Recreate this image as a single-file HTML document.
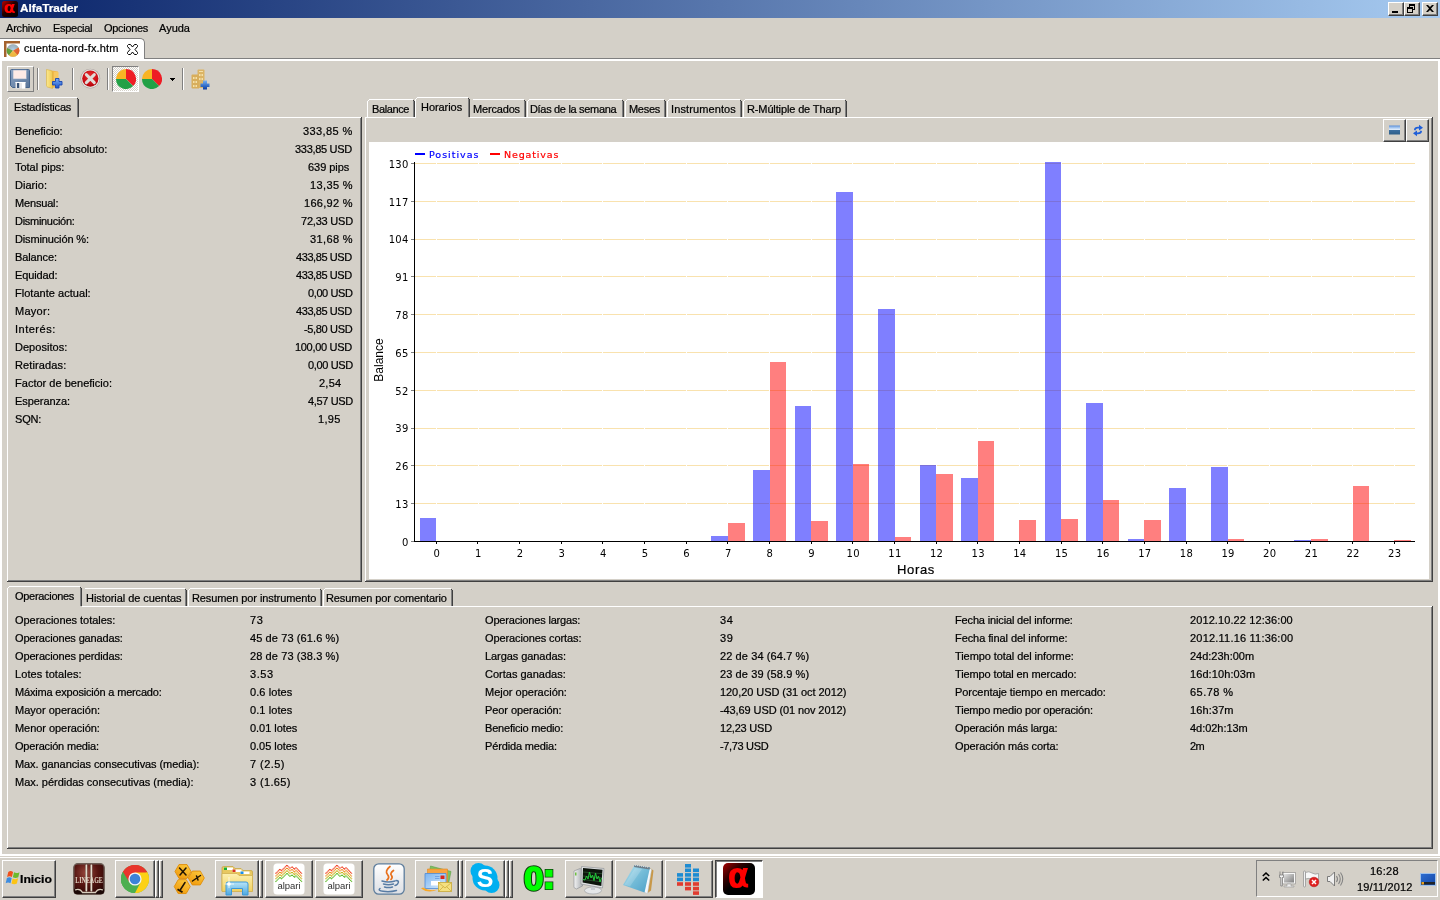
<!DOCTYPE html><html lang="es"><head><meta charset="utf-8"><title>AlfaTrader</title><style>
*{box-sizing:border-box;margin:0;padding:0}
html,body{width:1440px;height:900px;overflow:hidden;background:#d4d0c8}
body{position:relative;font-family:"Liberation Sans",sans-serif;font-size:11px;color:#000;line-height:18px}
.a{position:absolute}
.t{position:absolute;white-space:pre;height:18px;line-height:18px;will-change:transform;-webkit-text-stroke:.22px}
.r{text-align:right}
.b{font-weight:bold}
svg{position:absolute;overflow:visible;will-change:transform}
</style></head><body>
<div class="a" style="left:0px;top:0px;width:1440px;height:18px;background:linear-gradient(90deg,#0a246a 0%,#a6caf0 100%);"></div>
<svg style="left:2px;top:1px" width="16" height="16" viewBox="0 0 16 16"><defs><linearGradient id="ig" x1="0" y1="0" x2="1" y2="1"><stop offset="0" stop-color="#c00000"/><stop offset=".45" stop-color="#200000"/><stop offset="1" stop-color="#000"/></linearGradient></defs><rect width="16" height="16" rx="2.5" fill="url(#ig)"/><text x="1.800" y="12" font-family="DejaVu Sans,sans-serif" font-weight="bold" font-size="15.500" fill="#ff0000" textLength="11.800" lengthAdjust="spacingAndGlyphs">α</text></svg>
<div class="t b" style="left:20.3px;top:-1px;transform:scaleX(1.067);transform-origin:0 0;font-weight:bold;color:#fff;">AlfaTrader</div>
<div class="a" style="left:1388px;top:2px;width:16px;height:14px;background:#d4d0c8;border:1px solid;border-color:#fff #404040 #404040 #fff;box-shadow:inset -1px -1px 0 #808080"><div class="a" style="left:3px;top:8px;width:6px;height:2px;background:#000"></div></div>
<div class="a" style="left:1404px;top:2px;width:16px;height:14px;background:#d4d0c8;border:1px solid;border-color:#fff #404040 #404040 #fff;box-shadow:inset -1px -1px 0 #808080"><div class="a" style="left:4px;top:1px;width:6px;height:6px;border:1px solid #000;border-top-width:2px"></div><div class="a" style="left:2px;top:4px;width:6px;height:6px;border:1px solid #000;border-top-width:2px;background:#d4d0c8"></div></div>
<div class="a" style="left:1422px;top:2px;width:16px;height:14px;background:#d4d0c8;border:1px solid;border-color:#fff #404040 #404040 #fff;box-shadow:inset -1px -1px 0 #808080"><svg style="left:3px;top:2px" width="8" height="7" viewBox="0 0 8 7"><path d="M0 0h2l2 2 2-2h2L5 3.5 8 7H6L4 5 2 7H0l3-3.5z" fill="#000"/></svg></div>
<div class="t " style="left:6.3px;top:19px;letter-spacing:-0.20px;">Archivo</div>
<div class="t " style="left:52.5px;top:19px;letter-spacing:-0.29px;">Especial</div>
<div class="t " style="left:103.5px;top:19px;letter-spacing:-0.31px;">Opciones</div>
<div class="t " style="left:159.3px;top:19px;letter-spacing:0.00px;">Ayuda</div>
<div class="a" style="left:0px;top:59px;width:1440px;height:2px;background:#ffffff;"></div>
<div class="a" style="left:0px;top:59px;width:2px;height:797px;background:#ffffff;"></div>
<div class="a" style="left:1438px;top:59px;width:2px;height:797px;background:#ffffff;"></div>
<div class="a" style="left:0px;top:854px;width:1440px;height:2px;background:#ffffff;"></div>
<div class="a" style="left:0px;top:58px;width:1440px;height:1px;background:#808080;"></div>
<div class="a" style="left:0;top:38px;width:145px;height:21px;background:#fff;border-top:1px solid #808080;border-right:1px solid #808080;border-top-right-radius:5px"></div>
<div class="t " style="left:24.0px;top:39px;letter-spacing:0.12px;">cuenta-nord-fx.htm</div>
<svg style="left:4px;top:41px" width="16" height="16" viewBox="0 0 16 16"><defs><radialGradient id="tg" cx=".5" cy=".45" r=".55"><stop offset="0" stop-color="#fff"/><stop offset=".35" stop-color="#e8d9c0"/><stop offset="1" stop-color="#c8a070"/></radialGradient></defs><path d="M0 0h16v2.500H2.500V16H0z" fill="#a4622e"/><circle cx="9" cy="9.5" r="6.3" fill="url(#tg)"/><path d="M9 9.5L3.2 7A6.3 6.3 0 0 0 5 14.3z" fill="#4c9a2a" opacity=".85"/><path d="M9 9.5L14.6 6.6A6.3 6.3 0 0 1 13.5 14z" fill="#e0521c" opacity=".85"/><path d="M9 9.5L5 14.3A6.3 6.3 0 0 0 13.5 14z" fill="#f2b632" opacity=".85"/><path d="M9 9.5L3.2 7A6.3 6.3 0 0 1 14.6 6.6z" fill="#6fa8dc" opacity=".55"/></svg>
<svg style="left:127px;top:44px" width="11" height="11" viewBox="0 0 11 11"><path d="M1.5 .5h2L5.5 3 7.500 .5h2L10.500 1.500v1L8 5.500 10.500 8.500v1L9.500 10.500h-2L5.500 8 3.500 10.500h-2L.5 9.500v-1L3 5.500 .5 2.500v-1z" fill="#fff" stroke="#000" stroke-width="1"/></svg>
<div class="a" style="left:37px;top:68px;width:1px;height:22px;background:#808080;"></div>
<div class="a" style="left:38px;top:68px;width:1px;height:22px;background:#ffffff;"></div>
<div class="a" style="left:72px;top:68px;width:1px;height:22px;background:#808080;"></div>
<div class="a" style="left:73px;top:68px;width:1px;height:22px;background:#ffffff;"></div>
<div class="a" style="left:107px;top:68px;width:1px;height:22px;background:#808080;"></div>
<div class="a" style="left:108px;top:68px;width:1px;height:22px;background:#ffffff;"></div>
<div class="a" style="left:182px;top:68px;width:1px;height:22px;background:#808080;"></div>
<div class="a" style="left:183px;top:68px;width:1px;height:22px;background:#ffffff;"></div>
<div class="a" style="left:7px;top:66px;width:27px;height:26px;border:1px solid;border-color:#fff #808080 #808080 #fff"></div>
<svg style="left:10px;top:69px" width="20" height="20" viewBox="0 0 20 20"><defs><linearGradient id="fl" x1="0" y1="0" x2="1" y2="1"><stop offset="0" stop-color="#8ca4c4"/><stop offset="1" stop-color="#587498"/></linearGradient></defs>
<path d="M.5 1.500Q.5 .5 1.500 .5H18.500Q19.500 .5 19.500 1.500V18.500H2.500L.5 16.500z" fill="url(#fl)" stroke="#46648c" stroke-width="1"/>
<rect x="3" y="1" width="13.500" height="9" fill="#fdeae6" stroke="#8aa4c4" stroke-width=".6"/>
<rect x="5.500" y="13" width="10" height="6.500" fill="#e8e8ea"/><rect x="5.500" y="13" width="10" height="1" fill="#fff"/>
<rect x="7" y="14" width="2.200" height="5" fill="#3a5478"/><rect x="12" y="14" width="3" height="5.500" fill="#fff"/></svg>
<svg style="left:45px;top:68px" width="18" height="22" viewBox="0 0 18 22"><defs><linearGradient id="fo" x1="0" y1="0" x2="1" y2="0"><stop offset="0" stop-color="#fbe98e"/><stop offset="1" stop-color="#f0c850"/></linearGradient><linearGradient id="bp" x1="0" y1="0" x2="0" y2="1"><stop offset="0" stop-color="#7ab0f8"/><stop offset="1" stop-color="#1c54c8"/></linearGradient></defs>
<path d="M6.500 2.500L13 3.500V19L6.500 20z" fill="#f3b84a"/>
<path d="M9 4h4.500v14H9z" fill="#f7c860"/>
<path d="M1.500 1.500L6 2.500Q7.500 3 7.500 4.500V20.500L2.500 19Q1.500 18.500 1.500 17.500z" fill="url(#fo)" stroke="#d8b040" stroke-width=".6"/>
<path d="M10.500 10.500h3.500v3h3v3.500h-3v3h-3.500v-3h-3v-3.500h3z" fill="url(#bp)" stroke="#1846b0" stroke-width=".9"/></svg>
<svg style="left:80px;top:68px" width="21" height="21" viewBox="0 0 21 21"><defs><radialGradient id="rx" cx=".5" cy=".35" r=".7"><stop offset="0" stop-color="#e83030"/><stop offset=".7" stop-color="#c80c14"/><stop offset="1" stop-color="#a00008"/></radialGradient></defs>
<circle cx="10.300" cy="10.600" r="9.900" fill="#aca4a0"/><circle cx="10.300" cy="10.600" r="9.300" fill="#e4e0dc"/><circle cx="10.300" cy="10.600" r="8.100" fill="url(#rx)"/>
<path d="M6.300 6.600L14.300 14.600M14.300 6.600L6.300 14.600" stroke="#e0dcd8" stroke-width="3" stroke-linecap="round"/></svg>
<div class="a" style="left:112px;top:66px;width:27px;height:26px;border:1px solid;border-color:#808080 #fff #fff #808080;background:repeating-conic-gradient(#fff 0 25%,#d4d0c8 0 50%) 0 0/2px 2px"></div>
<svg style="left:116px;top:69px" width="20" height="20" viewBox="0 0 20 20"><path d="M10 10V0A10 10 0 0 1 17.070 17.070z" fill="#ee1c24"/><path d="M10 10L17.070 17.070A10 10 0 0 1 0 10z" fill="#22a046"/><path d="M10 10H0A10 10 0 0 1 10 0z" fill="#f8b424"/></svg>
<svg style="left:142px;top:69px" width="20" height="20" viewBox="0 0 20 20"><path d="M10 10V0A10 10 0 0 1 17.070 17.070z" fill="#ee1c24"/><path d="M10 10L17.070 17.070A10 10 0 0 1 0 10z" fill="#22a046"/><path d="M10 10H0A10 10 0 0 1 10 0z" fill="#f8b424"/></svg>
<div class="a" style="left:170px;top:78px;width:5px;height:1px;background:#000;"></div>
<div class="a" style="left:171px;top:79px;width:3px;height:1px;background:#000;"></div>
<div class="a" style="left:172px;top:80px;width:1px;height:1px;background:#000;"></div>
<svg style="left:191px;top:69px" width="19" height="21" viewBox="0 0 19 21"><defs><linearGradient id="bp2" x1="0" y1="0" x2="0" y2="1"><stop offset="0" stop-color="#78b0f0"/><stop offset=".5" stop-color="#3c78d0"/><stop offset="1" stop-color="#0c3ca0"/></linearGradient></defs>
<path d="M6.500 1.500Q6.500 .5 7.500 .5H12.500Q13.500 .5 13.500 1.500V19H6.500z" fill="#dcb464"/>
<path d="M.5 6.500Q.5 5.500 1.500 5.500H8V19.500H1.500Q.5 19.500 .5 18.500z" fill="#d8ae5c"/>
<g fill="#f4e0a8"><rect x="8" y="2" width="4" height="1"/><rect x="8" y="5" width="1.500" height="2"/><rect x="10.500" y="5" width="1.500" height="2"/><rect x="8" y="9" width="1.500" height="2"/><rect x="10.500" y="9" width="1.500" height="2"/><rect x="2" y="8" width="1.500" height="2"/><rect x="4.500" y="8" width="1.500" height="2"/><rect x="2" y="12" width="1.500" height="2"/><rect x="4.500" y="12" width="1.500" height="2"/><rect x="2" y="16" width="1.500" height="2"/><rect x="4.500" y="16" width="1.500" height="2"/></g>
<path d="M12 11.500h4v3h2.500v3.500H16v2.500h-4V18H9.500v-3.500H12z" fill="url(#bp2)"/></svg>
<div class="a" style="left:7px;top:117px;width:355px;height:1px;background:#ffffff;"></div>
<div class="a" style="left:7px;top:117px;width:1px;height:465px;background:#ffffff;"></div>
<div class="a" style="left:8px;top:580px;width:353px;height:1px;background:#808080;"></div>
<div class="a" style="left:360px;top:118px;width:1px;height:463px;background:#808080;"></div>
<div class="a" style="left:7px;top:581px;width:355px;height:1px;background:#404040;"></div>
<div class="a" style="left:361px;top:117px;width:1px;height:465px;background:#404040;"></div>
<div class="a" style="left:7px;top:97px;width:72px;height:21px;background:#d4d0c8;"></div>
<div class="a" style="left:9px;top:97px;width:68px;height:1px;background:#ffffff;"></div>
<div class="a" style="left:7px;top:99px;width:1px;height:19px;background:#ffffff;"></div>
<div class="a" style="left:8px;top:98px;width:1px;height:1px;background:#ffffff;"></div>
<div class="a" style="left:77px;top:99px;width:1px;height:18px;background:#808080;"></div>
<div class="a" style="left:78px;top:99px;width:1px;height:18px;background:#404040;"></div>
<div class="a" style="left:77px;top:98px;width:1px;height:1px;background:#404040;"></div>
<div class="t " style="left:13.5px;top:98px;letter-spacing:-0.18px;">Estadísticas</div>
<div class="t " style="left:14.8px;top:122px;letter-spacing:-0.09px;">Beneficio:</div>
<div class="t " style="left:303.3px;top:122px;letter-spacing:0.39px;">333,85 %</div>
<div class="t " style="left:14.8px;top:140px;letter-spacing:-0.03px;">Beneficio absoluto:</div>
<div class="t " style="left:294.7px;top:140px;letter-spacing:-0.30px;">333,85 USD</div>
<div class="t " style="left:14.8px;top:158px;letter-spacing:-0.02px;">Total pips:</div>
<div class="t " style="left:308.3px;top:158px;letter-spacing:-0.04px;">639 pips</div>
<div class="t " style="left:14.8px;top:176px;letter-spacing:0.03px;">Diario:</div>
<div class="t " style="left:309.7px;top:176px;letter-spacing:0.38px;">13,35 %</div>
<div class="t " style="left:14.8px;top:194px;letter-spacing:-0.17px;">Mensual:</div>
<div class="t " style="left:304.0px;top:194px;letter-spacing:0.29px;">166,92 %</div>
<div class="t " style="left:14.8px;top:212px;letter-spacing:-0.29px;">Disminución:</div>
<div class="t " style="left:300.7px;top:212px;letter-spacing:-0.21px;">72,33 USD</div>
<div class="t " style="left:14.8px;top:230px;letter-spacing:-0.14px;">Disminución %:</div>
<div class="t " style="left:309.7px;top:230px;letter-spacing:0.38px;">31,68 %</div>
<div class="t " style="left:14.8px;top:248px;letter-spacing:-0.11px;">Balance:</div>
<div class="t " style="left:295.7px;top:248px;letter-spacing:-0.41px;">433,85 USD</div>
<div class="t " style="left:14.8px;top:266px;letter-spacing:-0.11px;">Equidad:</div>
<div class="t " style="left:295.7px;top:266px;letter-spacing:-0.41px;">433,85 USD</div>
<div class="t " style="left:14.8px;top:284px;letter-spacing:0.03px;">Flotante actual:</div>
<div class="t " style="left:307.7px;top:284px;letter-spacing:-0.39px;">0,00 USD</div>
<div class="t " style="left:14.8px;top:302px;letter-spacing:0.28px;">Mayor:</div>
<div class="t " style="left:295.7px;top:302px;letter-spacing:-0.41px;">433,85 USD</div>
<div class="t " style="left:14.8px;top:320px;letter-spacing:0.50px;">Interés:</div>
<div class="t " style="left:303.7px;top:320px;letter-spacing:-0.34px;">-5,80 USD</div>
<div class="t " style="left:14.8px;top:338px;letter-spacing:0.03px;">Depositos:</div>
<div class="t " style="left:294.8px;top:338px;letter-spacing:-0.31px;">100,00 USD</div>
<div class="t " style="left:14.8px;top:356px;letter-spacing:0.13px;">Retiradas:</div>
<div class="t " style="left:307.5px;top:356px;letter-spacing:-0.36px;">0,00 USD</div>
<div class="t " style="left:14.8px;top:374px;letter-spacing:0.02px;">Factor de beneficio:</div>
<div class="t " style="left:318.5px;top:374px;letter-spacing:0.23px;">2,54</div>
<div class="t " style="left:14.8px;top:392px;letter-spacing:-0.07px;">Esperanza:</div>
<div class="t " style="left:307.5px;top:392px;letter-spacing:-0.36px;">4,57 USD</div>
<div class="t " style="left:14.8px;top:410px;letter-spacing:-0.17px;">SQN:</div>
<div class="t " style="left:318.2px;top:410px;letter-spacing:0.33px;">1,95</div>
<div class="a" style="left:365px;top:117px;width:1068px;height:1px;background:#ffffff;"></div>
<div class="a" style="left:365px;top:117px;width:1px;height:465px;background:#ffffff;"></div>
<div class="a" style="left:366px;top:580px;width:1066px;height:1px;background:#808080;"></div>
<div class="a" style="left:1431px;top:118px;width:1px;height:463px;background:#808080;"></div>
<div class="a" style="left:365px;top:581px;width:1068px;height:1px;background:#404040;"></div>
<div class="a" style="left:1432px;top:117px;width:1px;height:465px;background:#404040;"></div>
<div class="a" style="left:369px;top:99px;width:44px;height:1px;background:#ffffff;"></div>
<div class="a" style="left:367px;top:101px;width:1px;height:16px;background:#ffffff;"></div>
<div class="a" style="left:368px;top:100px;width:1px;height:1px;background:#ffffff;"></div>
<div class="a" style="left:413px;top:101px;width:1px;height:16px;background:#808080;"></div>
<div class="a" style="left:414px;top:101px;width:1px;height:16px;background:#404040;"></div>
<div class="a" style="left:413px;top:100px;width:1px;height:1px;background:#404040;"></div>
<div class="t " style="left:371.5px;top:100px;letter-spacing:-0.38px;">Balance</div>
<div class="a" style="left:415px;top:97px;width:55px;height:21px;background:#d4d0c8;"></div>
<div class="a" style="left:417px;top:97px;width:51px;height:1px;background:#ffffff;"></div>
<div class="a" style="left:415px;top:99px;width:1px;height:19px;background:#ffffff;"></div>
<div class="a" style="left:416px;top:98px;width:1px;height:1px;background:#ffffff;"></div>
<div class="a" style="left:468px;top:99px;width:1px;height:18px;background:#808080;"></div>
<div class="a" style="left:469px;top:99px;width:1px;height:18px;background:#404040;"></div>
<div class="a" style="left:468px;top:98px;width:1px;height:1px;background:#404040;"></div>
<div class="t " style="left:420.6px;top:98px;letter-spacing:-0.06px;">Horarios</div>
<div class="a" style="left:473px;top:99px;width:51px;height:1px;background:#ffffff;"></div>
<div class="a" style="left:524px;top:101px;width:1px;height:16px;background:#808080;"></div>
<div class="a" style="left:525px;top:101px;width:1px;height:16px;background:#404040;"></div>
<div class="a" style="left:524px;top:100px;width:1px;height:1px;background:#404040;"></div>
<div class="t " style="left:472.5px;top:100px;letter-spacing:-0.17px;">Mercados</div>
<div class="a" style="left:529px;top:99px;width:93px;height:1px;background:#ffffff;"></div>
<div class="a" style="left:527px;top:101px;width:1px;height:16px;background:#ffffff;"></div>
<div class="a" style="left:528px;top:100px;width:1px;height:1px;background:#ffffff;"></div>
<div class="a" style="left:622px;top:101px;width:1px;height:16px;background:#808080;"></div>
<div class="a" style="left:623px;top:101px;width:1px;height:16px;background:#404040;"></div>
<div class="a" style="left:622px;top:100px;width:1px;height:1px;background:#404040;"></div>
<div class="t " style="left:530.3px;top:100px;letter-spacing:-0.32px;">Días de la semana</div>
<div class="a" style="left:627px;top:99px;width:37px;height:1px;background:#ffffff;"></div>
<div class="a" style="left:625px;top:101px;width:1px;height:16px;background:#ffffff;"></div>
<div class="a" style="left:626px;top:100px;width:1px;height:1px;background:#ffffff;"></div>
<div class="a" style="left:664px;top:101px;width:1px;height:16px;background:#808080;"></div>
<div class="a" style="left:665px;top:101px;width:1px;height:16px;background:#404040;"></div>
<div class="a" style="left:664px;top:100px;width:1px;height:1px;background:#404040;"></div>
<div class="t " style="left:628.7px;top:100px;letter-spacing:-0.30px;">Meses</div>
<div class="a" style="left:669px;top:99px;width:71px;height:1px;background:#ffffff;"></div>
<div class="a" style="left:667px;top:101px;width:1px;height:16px;background:#ffffff;"></div>
<div class="a" style="left:668px;top:100px;width:1px;height:1px;background:#ffffff;"></div>
<div class="a" style="left:740px;top:101px;width:1px;height:16px;background:#808080;"></div>
<div class="a" style="left:741px;top:101px;width:1px;height:16px;background:#404040;"></div>
<div class="a" style="left:740px;top:100px;width:1px;height:1px;background:#404040;"></div>
<div class="t " style="left:670.8px;top:100px;letter-spacing:0.11px;">Instrumentos</div>
<div class="a" style="left:745px;top:99px;width:100px;height:1px;background:#ffffff;"></div>
<div class="a" style="left:743px;top:101px;width:1px;height:16px;background:#ffffff;"></div>
<div class="a" style="left:744px;top:100px;width:1px;height:1px;background:#ffffff;"></div>
<div class="a" style="left:845px;top:101px;width:1px;height:16px;background:#808080;"></div>
<div class="a" style="left:846px;top:101px;width:1px;height:16px;background:#404040;"></div>
<div class="a" style="left:845px;top:100px;width:1px;height:1px;background:#404040;"></div>
<div class="t " style="left:746.5px;top:100px;letter-spacing:-0.13px;">R-Múltiple de Tharp</div>
<div class="a" style="left:7px;top:606px;width:1426px;height:1px;background:#ffffff;"></div>
<div class="a" style="left:7px;top:606px;width:1px;height:243px;background:#ffffff;"></div>
<div class="a" style="left:8px;top:847px;width:1424px;height:1px;background:#808080;"></div>
<div class="a" style="left:1431px;top:607px;width:1px;height:241px;background:#808080;"></div>
<div class="a" style="left:7px;top:848px;width:1426px;height:1px;background:#404040;"></div>
<div class="a" style="left:1432px;top:606px;width:1px;height:243px;background:#404040;"></div>
<div class="a" style="left:7px;top:586px;width:75px;height:21px;background:#d4d0c8;"></div>
<div class="a" style="left:9px;top:586px;width:71px;height:1px;background:#ffffff;"></div>
<div class="a" style="left:7px;top:588px;width:1px;height:19px;background:#ffffff;"></div>
<div class="a" style="left:8px;top:587px;width:1px;height:1px;background:#ffffff;"></div>
<div class="a" style="left:80px;top:588px;width:1px;height:18px;background:#808080;"></div>
<div class="a" style="left:81px;top:588px;width:1px;height:18px;background:#404040;"></div>
<div class="a" style="left:80px;top:587px;width:1px;height:1px;background:#404040;"></div>
<div class="t " style="left:15.0px;top:587px;letter-spacing:-0.30px;">Operaciones</div>
<div class="a" style="left:85px;top:588px;width:100px;height:1px;background:#ffffff;"></div>
<div class="a" style="left:185px;top:590px;width:1px;height:16px;background:#808080;"></div>
<div class="a" style="left:186px;top:590px;width:1px;height:16px;background:#404040;"></div>
<div class="a" style="left:185px;top:589px;width:1px;height:1px;background:#404040;"></div>
<div class="t " style="left:85.6px;top:589px;letter-spacing:-0.06px;">Historial de cuentas</div>
<div class="a" style="left:190px;top:588px;width:130px;height:1px;background:#ffffff;"></div>
<div class="a" style="left:188px;top:590px;width:1px;height:16px;background:#ffffff;"></div>
<div class="a" style="left:189px;top:589px;width:1px;height:1px;background:#ffffff;"></div>
<div class="a" style="left:320px;top:590px;width:1px;height:16px;background:#808080;"></div>
<div class="a" style="left:321px;top:590px;width:1px;height:16px;background:#404040;"></div>
<div class="a" style="left:320px;top:589px;width:1px;height:1px;background:#404040;"></div>
<div class="t " style="left:191.5px;top:589px;letter-spacing:-0.10px;">Resumen por instrumento</div>
<div class="a" style="left:325px;top:588px;width:126px;height:1px;background:#ffffff;"></div>
<div class="a" style="left:323px;top:590px;width:1px;height:16px;background:#ffffff;"></div>
<div class="a" style="left:324px;top:589px;width:1px;height:1px;background:#ffffff;"></div>
<div class="a" style="left:451px;top:590px;width:1px;height:16px;background:#808080;"></div>
<div class="a" style="left:452px;top:590px;width:1px;height:16px;background:#404040;"></div>
<div class="a" style="left:451px;top:589px;width:1px;height:1px;background:#404040;"></div>
<div class="t " style="left:326.3px;top:589px;letter-spacing:-0.12px;">Resumen por comentario</div>
<div class="t " style="left:14.8px;top:611px;letter-spacing:-0.03px;">Operaciones totales:</div>
<div class="t " style="left:250.0px;top:611px;letter-spacing:0.60px;">73</div>
<div class="t " style="left:14.8px;top:629px;letter-spacing:-0.15px;">Operaciones ganadas:</div>
<div class="t " style="left:250.0px;top:629px;letter-spacing:0.10px;">45 de 73 (61.6 %)</div>
<div class="t " style="left:14.8px;top:647px;letter-spacing:-0.14px;">Operaciones perdidas:</div>
<div class="t " style="left:250.0px;top:647px;letter-spacing:0.10px;">28 de 73 (38.3 %)</div>
<div class="t " style="left:14.8px;top:665px;letter-spacing:0.09px;">Lotes totales:</div>
<div class="t " style="left:250.0px;top:665px;letter-spacing:0.53px;">3.53</div>
<div class="t " style="left:14.8px;top:683px;letter-spacing:-0.18px;">Máxima exposición a mercado:</div>
<div class="t " style="left:250.0px;top:683px;letter-spacing:0.08px;">0.6 lotes</div>
<div class="t " style="left:14.8px;top:701px;letter-spacing:0.01px;">Mayor operación:</div>
<div class="t " style="left:250.0px;top:701px;letter-spacing:0.08px;">0.1 lotes</div>
<div class="t " style="left:14.8px;top:719px;letter-spacing:-0.05px;">Menor operación:</div>
<div class="t " style="left:250.0px;top:719px;letter-spacing:-0.04px;">0.01 lotes</div>
<div class="t " style="left:14.8px;top:737px;letter-spacing:-0.19px;">Operación media:</div>
<div class="t " style="left:250.0px;top:737px;letter-spacing:-0.04px;">0.05 lotes</div>
<div class="t " style="left:14.8px;top:755px;letter-spacing:-0.08px;">Max. ganancias consecutivas (media):</div>
<div class="t " style="left:250.0px;top:755px;letter-spacing:0.43px;">7 (2.5)</div>
<div class="t " style="left:14.8px;top:773px;letter-spacing:-0.02px;">Max. pérdidas consecutivas (media):</div>
<div class="t " style="left:250.0px;top:773px;letter-spacing:0.37px;">3 (1.65)</div>
<div class="t " style="left:485.0px;top:611px;letter-spacing:-0.17px;">Operaciones largas:</div>
<div class="t " style="left:720.0px;top:611px;letter-spacing:0.60px;">34</div>
<div class="t " style="left:485.0px;top:629px;letter-spacing:-0.11px;">Operaciones cortas:</div>
<div class="t " style="left:720.0px;top:629px;letter-spacing:0.60px;">39</div>
<div class="t " style="left:485.0px;top:647px;letter-spacing:-0.07px;">Largas ganadas:</div>
<div class="t " style="left:720.0px;top:647px;letter-spacing:0.10px;">22 de 34 (64.7 %)</div>
<div class="t " style="left:485.0px;top:665px;letter-spacing:0.00px;">Cortas ganadas:</div>
<div class="t " style="left:720.0px;top:665px;letter-spacing:0.10px;">23 de 39 (58.9 %)</div>
<div class="t " style="left:485.0px;top:683px;letter-spacing:0.00px;">Mejor operación:</div>
<div class="t " style="left:720.0px;top:683px;letter-spacing:-0.06px;">120,20 USD (31 oct 2012)</div>
<div class="t " style="left:485.0px;top:701px;letter-spacing:-0.07px;">Peor operación:</div>
<div class="t " style="left:720.0px;top:701px;letter-spacing:-0.10px;">-43,69 USD (01 nov 2012)</div>
<div class="t " style="left:485.0px;top:719px;letter-spacing:-0.20px;">Beneficio medio:</div>
<div class="t " style="left:720.0px;top:719px;letter-spacing:-0.21px;">12,23 USD</div>
<div class="t " style="left:485.0px;top:737px;letter-spacing:-0.15px;">Pérdida media:</div>
<div class="t " style="left:720.0px;top:737px;letter-spacing:-0.34px;">-7,73 USD</div>
<div class="t " style="left:954.9px;top:611px;letter-spacing:-0.15px;">Fecha inicial del informe:</div>
<div class="t " style="left:1190.0px;top:611px;letter-spacing:0.10px;">2012.10.22 12:36:00</div>
<div class="t " style="left:954.9px;top:629px;letter-spacing:-0.08px;">Fecha final del informe:</div>
<div class="t " style="left:1190.0px;top:629px;letter-spacing:0.21px;">2012.11.16 11:36:00</div>
<div class="t " style="left:954.9px;top:647px;letter-spacing:-0.08px;">Tiempo total del informe:</div>
<div class="t " style="left:1190.0px;top:647px;letter-spacing:-0.01px;">24d:23h:00m</div>
<div class="t " style="left:954.9px;top:665px;letter-spacing:-0.12px;">Tiempo total en mercado:</div>
<div class="t " style="left:1190.0px;top:665px;letter-spacing:0.09px;">16d:10h:03m</div>
<div class="t " style="left:954.9px;top:683px;letter-spacing:-0.07px;">Porcentaje tiempo en mercado:</div>
<div class="t " style="left:1190.0px;top:683px;letter-spacing:0.45px;">65.78 %</div>
<div class="t " style="left:954.9px;top:701px;letter-spacing:-0.18px;">Tiempo medio por operación:</div>
<div class="t " style="left:1190.0px;top:701px;letter-spacing:0.12px;">16h:37m</div>
<div class="t " style="left:954.9px;top:719px;letter-spacing:-0.14px;">Operación más larga:</div>
<div class="t " style="left:1190.0px;top:719px;letter-spacing:-0.04px;">4d:02h:13m</div>
<div class="t " style="left:954.9px;top:737px;letter-spacing:-0.08px;">Operación más corta:</div>
<div class="t " style="left:1190.0px;top:737px;letter-spacing:-0.60px;">2m</div>
<div class="a" style="left:369px;top:142px;width:1060px;height:437px;background:#ffffff;"></div>
<div class="a" style="left:1383px;top:119px;width:23px;height:23px;background:#d4d0c8;border:1px solid;border-color:#fff #404040 #404040 #fff;box-shadow:inset -1px -1px 0 #808080"><svg style="left:5px;top:5px" width="11" height="10" viewBox="0 0 11 10"><defs><linearGradient id="pg" x1="0" y1="0" x2="0" y2="1"><stop offset="0" stop-color="#5b8fd8"/><stop offset=".3" stop-color="#b7d3f5"/><stop offset=".5" stop-color="#e8f1fc"/><stop offset=".55" stop-color="#3c6e9e"/><stop offset="1" stop-color="#2f5f88"/></linearGradient></defs><rect width="11" height="9" y=".5" fill="url(#pg)"/></svg></div>
<div class="a" style="left:1406px;top:119px;width:23px;height:23px;background:#d4d0c8;border:1px solid;border-color:#fff #404040 #404040 #fff;box-shadow:inset -1px -1px 0 #808080"><svg style="left:5px;top:4px" width="12" height="13" viewBox="0 0 12 13"><path d="M2 6C2 3.500 4 2.500 7 2.800V.8L11 3.800 7 6.500V4.600C5 4.400 3.800 5 3.500 6.500z" fill="#1f5fd8"/><path d="M10 7C10 9.500 8 10.500 5 10.200v2L1 9.200 5 6.500v1.900c2 .2 3.200-.4 3.500-1.900z" fill="#1f5fd8"/></svg></div>
<svg style="left:0;top:0" width="1440" height="600" viewBox="0 0 1440 600" shape-rendering="crispEdges"><line x1="415" x2="1415" y1="163.5" y2="163.5" stroke="#f9e2ae" stroke-width="1"/><line x1="415" x2="1415" y1="201.3" y2="201.3" stroke="#f9e2ae" stroke-width="1"/><line x1="415" x2="1415" y1="239.1" y2="239.1" stroke="#f9e2ae" stroke-width="1"/><line x1="415" x2="1415" y1="276.9" y2="276.9" stroke="#f9e2ae" stroke-width="1"/><line x1="415" x2="1415" y1="314.7" y2="314.7" stroke="#f9e2ae" stroke-width="1"/><line x1="415" x2="1415" y1="352.5" y2="352.5" stroke="#f9e2ae" stroke-width="1"/><line x1="415" x2="1415" y1="390.3" y2="390.3" stroke="#f9e2ae" stroke-width="1"/><line x1="415" x2="1415" y1="428.1" y2="428.1" stroke="#f9e2ae" stroke-width="1"/><line x1="415" x2="1415" y1="465.9" y2="465.9" stroke="#f9e2ae" stroke-width="1"/><line x1="415" x2="1415" y1="503.7" y2="503.7" stroke="#f9e2ae" stroke-width="1"/><line x1="436.3" x2="436.3" y1="160" y2="540" stroke="#fff" stroke-width="1"/><line x1="478.0" x2="478.0" y1="160" y2="540" stroke="#fff" stroke-width="1"/><line x1="519.6" x2="519.6" y1="160" y2="540" stroke="#fff" stroke-width="1"/><line x1="561.3" x2="561.3" y1="160" y2="540" stroke="#fff" stroke-width="1"/><line x1="602.9" x2="602.9" y1="160" y2="540" stroke="#fff" stroke-width="1"/><line x1="644.6" x2="644.6" y1="160" y2="540" stroke="#fff" stroke-width="1"/><line x1="686.2" x2="686.2" y1="160" y2="540" stroke="#fff" stroke-width="1"/><line x1="727.9" x2="727.9" y1="160" y2="540" stroke="#fff" stroke-width="1"/><line x1="769.5" x2="769.5" y1="160" y2="540" stroke="#fff" stroke-width="1"/><line x1="811.2" x2="811.2" y1="160" y2="540" stroke="#fff" stroke-width="1"/><line x1="852.8" x2="852.8" y1="160" y2="540" stroke="#fff" stroke-width="1"/><line x1="894.5" x2="894.5" y1="160" y2="540" stroke="#fff" stroke-width="1"/><line x1="936.1" x2="936.1" y1="160" y2="540" stroke="#fff" stroke-width="1"/><line x1="977.8" x2="977.8" y1="160" y2="540" stroke="#fff" stroke-width="1"/><line x1="1019.4" x2="1019.4" y1="160" y2="540" stroke="#fff" stroke-width="1"/><line x1="1061.1" x2="1061.1" y1="160" y2="540" stroke="#fff" stroke-width="1"/><line x1="1102.7" x2="1102.7" y1="160" y2="540" stroke="#fff" stroke-width="1"/><line x1="1144.4" x2="1144.4" y1="160" y2="540" stroke="#fff" stroke-width="1"/><line x1="1186.0" x2="1186.0" y1="160" y2="540" stroke="#fff" stroke-width="1"/><line x1="1227.7" x2="1227.7" y1="160" y2="540" stroke="#fff" stroke-width="1"/><line x1="1269.3" x2="1269.3" y1="160" y2="540" stroke="#fff" stroke-width="1"/><line x1="1311.0" x2="1311.0" y1="160" y2="540" stroke="#fff" stroke-width="1"/><line x1="1352.6" x2="1352.6" y1="160" y2="540" stroke="#fff" stroke-width="1"/><line x1="1394.3" x2="1394.3" y1="160" y2="540" stroke="#fff" stroke-width="1"/><rect x="419.7" y="518.0" width="16.6" height="23.0" fill="#0000ff" fill-opacity=".5"/><rect x="711.3" y="535.5" width="16.6" height="5.5" fill="#0000ff" fill-opacity=".5"/><rect x="727.9" y="523.3" width="16.6" height="17.7" fill="#ff0000" fill-opacity=".5"/><rect x="752.9" y="469.5" width="16.6" height="71.5" fill="#0000ff" fill-opacity=".5"/><rect x="769.5" y="362.0" width="16.6" height="179.0" fill="#ff0000" fill-opacity=".5"/><rect x="794.6" y="406.0" width="16.6" height="135.0" fill="#0000ff" fill-opacity=".5"/><rect x="811.2" y="520.8" width="16.6" height="20.2" fill="#ff0000" fill-opacity=".5"/><rect x="836.2" y="192.0" width="16.6" height="349.0" fill="#0000ff" fill-opacity=".5"/><rect x="852.8" y="464.0" width="16.6" height="77.0" fill="#ff0000" fill-opacity=".5"/><rect x="877.9" y="309.0" width="16.6" height="232.0" fill="#0000ff" fill-opacity=".5"/><rect x="894.5" y="537.0" width="16.6" height="4.0" fill="#ff0000" fill-opacity=".5"/><rect x="919.5" y="465.0" width="16.6" height="76.0" fill="#0000ff" fill-opacity=".5"/><rect x="936.1" y="474.0" width="16.6" height="67.0" fill="#ff0000" fill-opacity=".5"/><rect x="961.2" y="478.4" width="16.6" height="62.6" fill="#0000ff" fill-opacity=".5"/><rect x="977.8" y="441.0" width="16.6" height="100.0" fill="#ff0000" fill-opacity=".5"/><rect x="1019.4" y="520.4" width="16.6" height="20.6" fill="#ff0000" fill-opacity=".5"/><rect x="1044.5" y="162.0" width="16.6" height="379.0" fill="#0000ff" fill-opacity=".5"/><rect x="1061.1" y="518.6" width="16.6" height="22.4" fill="#ff0000" fill-opacity=".5"/><rect x="1086.1" y="403.3" width="16.6" height="137.7" fill="#0000ff" fill-opacity=".5"/><rect x="1102.7" y="500.3" width="16.6" height="40.7" fill="#ff0000" fill-opacity=".5"/><rect x="1127.8" y="539.0" width="16.6" height="2.0" fill="#0000ff" fill-opacity=".5"/><rect x="1144.4" y="520.2" width="16.6" height="20.8" fill="#ff0000" fill-opacity=".5"/><rect x="1169.4" y="488.0" width="16.6" height="53.0" fill="#0000ff" fill-opacity=".5"/><rect x="1211.1" y="467.2" width="16.6" height="73.8" fill="#0000ff" fill-opacity=".5"/><rect x="1227.7" y="538.5" width="16.6" height="2.5" fill="#ff0000" fill-opacity=".5"/><rect x="1294.4" y="540.4" width="16.6" height="0.6" fill="#0000ff" fill-opacity=".5"/><rect x="1311.0" y="538.5" width="16.6" height="2.5" fill="#ff0000" fill-opacity=".5"/><rect x="1352.6" y="485.7" width="16.6" height="55.3" fill="#ff0000" fill-opacity=".5"/><rect x="1394.3" y="540.4" width="16.6" height="0.6" fill="#ff0000" fill-opacity=".5"/><rect x="414" y="162" width="1" height="380" fill="#000"/><rect x="414" y="541" width="1001" height="1" fill="#000"/><rect x="411" y="163" width="3" height="1" fill="#808080"/><rect x="411" y="201" width="3" height="1" fill="#808080"/><rect x="411" y="239" width="3" height="1" fill="#808080"/><rect x="411" y="276" width="3" height="1" fill="#808080"/><rect x="411" y="314" width="3" height="1" fill="#808080"/><rect x="411" y="352" width="3" height="1" fill="#808080"/><rect x="411" y="390" width="3" height="1" fill="#808080"/><rect x="411" y="428" width="3" height="1" fill="#808080"/><rect x="411" y="465" width="3" height="1" fill="#808080"/><rect x="411" y="503" width="3" height="1" fill="#808080"/><rect x="411" y="541" width="3" height="1" fill="#808080"/><rect x="436" y="542" width="1" height="2" fill="#000"/><rect x="477" y="542" width="1" height="2" fill="#000"/><rect x="519" y="542" width="1" height="2" fill="#000"/><rect x="561" y="542" width="1" height="2" fill="#000"/><rect x="602" y="542" width="1" height="2" fill="#000"/><rect x="644" y="542" width="1" height="2" fill="#000"/><rect x="686" y="542" width="1" height="2" fill="#000"/><rect x="727" y="542" width="1" height="2" fill="#000"/><rect x="769" y="542" width="1" height="2" fill="#000"/><rect x="811" y="542" width="1" height="2" fill="#000"/><rect x="852" y="542" width="1" height="2" fill="#000"/><rect x="894" y="542" width="1" height="2" fill="#000"/><rect x="936" y="542" width="1" height="2" fill="#000"/><rect x="977" y="542" width="1" height="2" fill="#000"/><rect x="1019" y="542" width="1" height="2" fill="#000"/><rect x="1061" y="542" width="1" height="2" fill="#000"/><rect x="1102" y="542" width="1" height="2" fill="#000"/><rect x="1144" y="542" width="1" height="2" fill="#000"/><rect x="1186" y="542" width="1" height="2" fill="#000"/><rect x="1227" y="542" width="1" height="2" fill="#000"/><rect x="1269" y="542" width="1" height="2" fill="#000"/><rect x="1310" y="542" width="1" height="2" fill="#000"/><rect x="1352" y="542" width="1" height="2" fill="#000"/><rect x="1394" y="542" width="1" height="2" fill="#000"/><rect x="415" y="153" width="10" height="2" fill="#0000ff"/><rect x="490" y="153" width="10" height="2" fill="#ff0000"/><text x="408.6" y="167.7" text-anchor="end" font-family="DejaVu Sans,sans-serif" font-size="10" letter-spacing=".25">130</text><text x="408.6" y="205.5" text-anchor="end" font-family="DejaVu Sans,sans-serif" font-size="10" letter-spacing=".25">117</text><text x="408.6" y="243.3" text-anchor="end" font-family="DejaVu Sans,sans-serif" font-size="10" letter-spacing=".25">104</text><text x="408.6" y="281.1" text-anchor="end" font-family="DejaVu Sans,sans-serif" font-size="10" letter-spacing=".25">91</text><text x="408.6" y="318.9" text-anchor="end" font-family="DejaVu Sans,sans-serif" font-size="10" letter-spacing=".25">78</text><text x="408.6" y="356.7" text-anchor="end" font-family="DejaVu Sans,sans-serif" font-size="10" letter-spacing=".25">65</text><text x="408.6" y="394.5" text-anchor="end" font-family="DejaVu Sans,sans-serif" font-size="10" letter-spacing=".25">52</text><text x="408.6" y="432.3" text-anchor="end" font-family="DejaVu Sans,sans-serif" font-size="10" letter-spacing=".25">39</text><text x="408.6" y="470.1" text-anchor="end" font-family="DejaVu Sans,sans-serif" font-size="10" letter-spacing=".25">26</text><text x="408.6" y="507.9" text-anchor="end" font-family="DejaVu Sans,sans-serif" font-size="10" letter-spacing=".25">13</text><text x="408.6" y="545.7" text-anchor="end" font-family="DejaVu Sans,sans-serif" font-size="10" letter-spacing=".25">0</text><text x="436.7" y="557.3" text-anchor="middle" font-family="DejaVu Sans,sans-serif" font-size="10" letter-spacing=".25">0</text><text x="478.4" y="557.3" text-anchor="middle" font-family="DejaVu Sans,sans-serif" font-size="10" letter-spacing=".25">1</text><text x="520.0" y="557.3" text-anchor="middle" font-family="DejaVu Sans,sans-serif" font-size="10" letter-spacing=".25">2</text><text x="561.7" y="557.3" text-anchor="middle" font-family="DejaVu Sans,sans-serif" font-size="10" letter-spacing=".25">3</text><text x="603.3" y="557.3" text-anchor="middle" font-family="DejaVu Sans,sans-serif" font-size="10" letter-spacing=".25">4</text><text x="645.0" y="557.3" text-anchor="middle" font-family="DejaVu Sans,sans-serif" font-size="10" letter-spacing=".25">5</text><text x="686.6" y="557.3" text-anchor="middle" font-family="DejaVu Sans,sans-serif" font-size="10" letter-spacing=".25">6</text><text x="728.3" y="557.3" text-anchor="middle" font-family="DejaVu Sans,sans-serif" font-size="10" letter-spacing=".25">7</text><text x="769.9" y="557.3" text-anchor="middle" font-family="DejaVu Sans,sans-serif" font-size="10" letter-spacing=".25">8</text><text x="811.6" y="557.3" text-anchor="middle" font-family="DejaVu Sans,sans-serif" font-size="10" letter-spacing=".25">9</text><text x="853.2" y="557.3" text-anchor="middle" font-family="DejaVu Sans,sans-serif" font-size="10" letter-spacing=".25">10</text><text x="894.9" y="557.3" text-anchor="middle" font-family="DejaVu Sans,sans-serif" font-size="10" letter-spacing=".25">11</text><text x="936.5" y="557.3" text-anchor="middle" font-family="DejaVu Sans,sans-serif" font-size="10" letter-spacing=".25">12</text><text x="978.2" y="557.3" text-anchor="middle" font-family="DejaVu Sans,sans-serif" font-size="10" letter-spacing=".25">13</text><text x="1019.8" y="557.3" text-anchor="middle" font-family="DejaVu Sans,sans-serif" font-size="10" letter-spacing=".25">14</text><text x="1061.5" y="557.3" text-anchor="middle" font-family="DejaVu Sans,sans-serif" font-size="10" letter-spacing=".25">15</text><text x="1103.1" y="557.3" text-anchor="middle" font-family="DejaVu Sans,sans-serif" font-size="10" letter-spacing=".25">16</text><text x="1144.8" y="557.3" text-anchor="middle" font-family="DejaVu Sans,sans-serif" font-size="10" letter-spacing=".25">17</text><text x="1186.4" y="557.3" text-anchor="middle" font-family="DejaVu Sans,sans-serif" font-size="10" letter-spacing=".25">18</text><text x="1228.1" y="557.3" text-anchor="middle" font-family="DejaVu Sans,sans-serif" font-size="10" letter-spacing=".25">19</text><text x="1269.7" y="557.3" text-anchor="middle" font-family="DejaVu Sans,sans-serif" font-size="10" letter-spacing=".25">20</text><text x="1311.4" y="557.3" text-anchor="middle" font-family="DejaVu Sans,sans-serif" font-size="10" letter-spacing=".25">21</text><text x="1353.0" y="557.3" text-anchor="middle" font-family="DejaVu Sans,sans-serif" font-size="10" letter-spacing=".25">22</text><text x="1394.7" y="557.3" text-anchor="middle" font-family="DejaVu Sans,sans-serif" font-size="10" letter-spacing=".25">23</text><text transform="translate(383,360) rotate(-90)" text-anchor="middle" font-family="Liberation Sans,sans-serif" font-size="12">Balance</text></svg>
<div class="t " style="left:428.7px;top:146px;letter-spacing:0.98px;font-family:'DejaVu Sans',sans-serif;font-size:9.5px;color:#0000ff;-webkit-text-stroke:.2px #0000ff;">Positivas</div>
<div class="t " style="left:503.7px;top:146px;letter-spacing:0.85px;font-family:'DejaVu Sans',sans-serif;font-size:9.5px;color:#ff0000;-webkit-text-stroke:.2px #ff0000;">Negativas</div>
<div class="t " style="left:896.7px;top:561px;letter-spacing:0.65px;font-size:13px;">Horas</div>
<div class="a" style="left:0px;top:856px;width:1440px;height:44px;background:#d4d0c8;"></div>
<div class="a" style="left:0px;top:857px;width:1440px;height:1px;background:#ffffff;"></div>
<div class="a" style="left:2px;top:860px;width:54px;height:38px;border:1px solid;border-color:#fff #404040 #404040 #fff;box-shadow:inset -1px -1px 0 #808080"></div>
<svg style="left:3.5px;top:870px" width="17.500" height="16" viewBox="0 0 14 15"><path d="M2.800 1.800Q5 .2 7.300 1.800L6.200 6.600Q4 5.200 1.700 6.600z" fill="#f0501c"/><path d="M8.200 2.200Q10.500 3.600 13.300 2L12.200 6.800Q9.800 8.300 7.100 6.900z" fill="#6cba2c"/><path d="M1.500 7.600Q3.800 6.200 6 7.600L4.900 12.400Q2.600 11 .4 12.400z" fill="#3c8ce0"/><path d="M6.900 7.900Q9.500 9.300 12 7.800L10.900 12.600Q8.500 14.100 5.800 12.700z" fill="#fcc414"/></svg>
<div class="t b" style="left:20.4px;top:870px;transform:scaleX(1.111);transform-origin:0 0;font-weight:bold;">Inicio</div>
<div class="a" style="left:115px;top:860px;width:40px;height:38px;border:1px solid;border-color:#fff #404040 #404040 #fff;box-shadow:inset -1px -1px 0 #808080"></div>
<div class="a" style="left:155px;top:860px;width:4px;height:38px;border:1px solid;border-color:#fff #404040 #404040 #fff;box-shadow:inset -1px -1px 0 #808080"></div>
<div class="a" style="left:159px;top:860px;width:4px;height:38px;border:1px solid;border-color:#fff #404040 #404040 #fff;box-shadow:inset -1px -1px 0 #808080"></div>
<div class="a" style="left:215px;top:860px;width:44px;height:38px;border:1px solid;border-color:#fff #404040 #404040 #fff;box-shadow:inset -1px -1px 0 #808080"></div>
<div class="a" style="left:259px;top:860px;width:4px;height:38px;border:1px solid;border-color:#fff #404040 #404040 #fff;box-shadow:inset -1px -1px 0 #808080"></div>
<div class="a" style="left:265px;top:860px;width:48px;height:38px;border:1px solid;border-color:#fff #404040 #404040 #fff;box-shadow:inset -1px -1px 0 #808080"></div>
<div class="a" style="left:315px;top:860px;width:48px;height:38px;border:1px solid;border-color:#fff #404040 #404040 #fff;box-shadow:inset -1px -1px 0 #808080"></div>
<div class="a" style="left:415px;top:860px;width:44px;height:38px;border:1px solid;border-color:#fff #404040 #404040 #fff;box-shadow:inset -1px -1px 0 #808080"></div>
<div class="a" style="left:459px;top:860px;width:4px;height:38px;border:1px solid;border-color:#fff #404040 #404040 #fff;box-shadow:inset -1px -1px 0 #808080"></div>
<div class="a" style="left:465px;top:860px;width:40px;height:38px;border:1px solid;border-color:#fff #404040 #404040 #fff;box-shadow:inset -1px -1px 0 #808080"></div>
<div class="a" style="left:505px;top:860px;width:4px;height:38px;border:1px solid;border-color:#fff #404040 #404040 #fff;box-shadow:inset -1px -1px 0 #808080"></div>
<div class="a" style="left:509px;top:860px;width:4px;height:38px;border:1px solid;border-color:#fff #404040 #404040 #fff;box-shadow:inset -1px -1px 0 #808080"></div>
<div class="a" style="left:565px;top:860px;width:48px;height:38px;border:1px solid;border-color:#fff #404040 #404040 #fff;box-shadow:inset -1px -1px 0 #808080"></div>
<div class="a" style="left:615px;top:860px;width:48px;height:38px;border:1px solid;border-color:#fff #404040 #404040 #fff;box-shadow:inset -1px -1px 0 #808080"></div>
<div class="a" style="left:665px;top:860px;width:48px;height:38px;border:1px solid;border-color:#fff #404040 #404040 #fff;box-shadow:inset -1px -1px 0 #808080"></div>
<div class="a" style="left:715px;top:860px;width:48px;height:38px;background:#fff;border:1px solid;border-color:#404040 #fff #fff #404040;box-shadow:inset 1px 1px 0 #808080"></div>
<svg style="left:73px;top:863px" width="32" height="32" viewBox="0 0 32 32"><defs><radialGradient id="lg" cx=".4" cy=".3" r=".9"><stop offset="0" stop-color="#98463c"/><stop offset=".45" stop-color="#541410"/><stop offset="1" stop-color="#1c0402"/></radialGradient><linearGradient id="ls" x1="0" y1="0" x2="1" y2="0"><stop offset="0" stop-color="#8a7a6c"/><stop offset=".5" stop-color="#f0e8dc"/><stop offset="1" stop-color="#8a7a6c"/></linearGradient></defs>
<rect x=".8" y=".8" width="30.400" height="30.400" rx="4" fill="url(#lg)" stroke="#6c5c54" stroke-width="1.400"/>
<path d="M1 26Q6 24 9 29H23Q26 24 31 26V29Q31 31 29 31H3Q1 31 1 29z" fill="#1c0806"/>
<path d="M2 27Q7 25 9.500 29.500H22.500Q25 25 30 27" fill="none" stroke="#d8ccbc" stroke-width="1.300"/>
<rect x="12.200" y="1.500" width="2.300" height="27" rx="1" fill="url(#ls)"/><rect x="17.200" y="1.500" width="2.300" height="27" rx="1" fill="url(#ls)"/>
<text x="2.300" y="19.800" font-family="Liberation Serif,serif" font-weight="bold" font-size="8" textLength="27.500" lengthAdjust="spacingAndGlyphs" fill="#e0d4c4">LINEAGE</text></svg>
<svg style="left:120px;top:864px" width="30" height="30" viewBox="0 0 30 30"><circle cx="15" cy="15" r="14" fill="#4caf50"/>
<path d="M15 15L2.880 8A14 14 0 0 1 27.120 8z" fill="#e8352c"/>
<path d="M15 15L27.120 8A14 14 0 0 1 15 29z" fill="#fcd116"/>
<path d="M15 15L15 29A14 14 0 0 1 2.880 8z" fill="#4caf50"/>
<path d="M15 8.500H27.300A14 14 0 0 0 2.880 8L9 18.500z" fill="#e8352c"/>
<path d="M20.600 18.200L15 29A14 14 0 0 0 27.300 8.500H15z" fill="#fcd116"/>
<path d="M9.400 18.200L2.880 8A14 14 0 0 0 15 29L20.600 18.200z" fill="#4caf50"/>
<circle cx="15" cy="15" r="6.600" fill="#f4f4f4"/><circle cx="15" cy="15" r="5.300" fill="#3c82d8"/></svg>
<svg style="left:173px;top:863px" width="32" height="32" viewBox="0 0 32 32"><defs><linearGradient id="hx" x1="0" y1="0" x2="0" y2="1"><stop offset="0" stop-color="#fcc83c"/><stop offset="1" stop-color="#f09a0c"/></linearGradient></defs>
<g fill="url(#hx)" stroke="#e08c08" stroke-width=".8"><path transform="translate(10,8.500) rotate(30)" d="M0 -8L6.930 -4V4L0 8L-6.930 4V-4z"/><path transform="translate(23.300,15) rotate(30)" d="M0 -8L6.930 -4V4L0 8L-6.930 4V-4z"/><path transform="translate(9.200,23.600) rotate(30)" d="M0 -8L6.930 -4V4L0 8L-6.930 4V-4z"/></g>
<g stroke="#201404" stroke-width="1.500" stroke-linecap="round" fill="none"><path d="M6.500 5L13 12M13 5L7 12"/><path d="M19.500 18L27.500 12.500M23.500 13L25 17"/><path d="M12 19.500L7.500 26.500"/></g><path d="M5 25.500L10 28.500L9 30L4 27z" fill="#201404"/></svg>
<svg style="left:221px;top:864px" width="33" height="32" viewBox="0 0 33 32"><defs><linearGradient id="ef" x1="0" y1="0" x2="0" y2="1"><stop offset="0" stop-color="#fdf0b0"/><stop offset="1" stop-color="#f0d060"/></linearGradient><linearGradient id="es" x1="0" y1="0" x2="0" y2="1"><stop offset="0" stop-color="#b8e4f8"/><stop offset="1" stop-color="#4ca8e0"/></linearGradient></defs>
<path d="M1 4Q1 2.500 2.500 2.500H12L14 4.500H20L22 6.500H30Q31.500 6.500 31.500 8V27H1z" fill="#e8c860" stroke="#c8a848" stroke-width=".8"/>
<rect x="3" y="3.500" width="9" height="2.500" fill="#fff"/><rect x="3" y="3.500" width="3" height="2.500" fill="#18b030"/>
<rect x="11.500" y="5.500" width="9" height="2.500" fill="#fff"/><rect x="11.500" y="5.500" width="3" height="2.500" fill="#d83020"/>
<rect x="19.500" y="7.500" width="9" height="2.500" fill="#fff"/><rect x="19.500" y="7.500" width="3" height="2.500" fill="#1890f0"/>
<path d="M1 9.500H16L18 11.500H31.500V27.500H1z" fill="url(#ef)" stroke="#d0b050" stroke-width=".8"/>
<path d="M5 20Q5 18 7 18H25Q27 18 27 20V31H21.500V24.500H10.500V31H5z" fill="url(#es)" stroke="#3c98d8" stroke-width="1"/>
<path d="M8 13V24M3.500 20H13" stroke="#fff" stroke-width=".8" opacity=".9"/><circle cx="8" cy="20" r="1.800" fill="#fff"/></svg>
<svg style="left:273px;top:863px" width="32" height="32" viewBox="0 0 32 32"><rect x=".5" y=".5" width="31" height="31" rx="3.500" fill="#fff"/><polyline transform="translate(2.500,2.2)" points="0,8.500 4.500,4 6,5.500 11.500,0 14.500,3 16.500,1.500 19,4 20.500,2.500 26.500,8.500" fill="none" stroke="#f03c1c" stroke-width="1.150" stroke-dasharray="1.300 .35"/><polyline transform="translate(2.500,4.9)" points="0,8.500 4.500,4 6,5.500 11.500,0 14.500,3 16.500,1.500 19,4 20.500,2.500 26.500,8.500" fill="none" stroke="#f08c1c" stroke-width="1.150" stroke-dasharray="1.300 .35"/><polyline transform="translate(2.500,7.6000000000000005)" points="0,8.500 4.500,4 6,5.500 11.500,0 14.500,3 16.500,1.500 19,4 20.500,2.500 26.500,8.500" fill="none" stroke="#c8b41c" stroke-width="1.150" stroke-dasharray="1.300 .35"/><polyline transform="translate(2.500,10.3)" points="0,8.500 4.500,4 6,5.500 11.500,0 14.500,3 16.500,1.500 19,4 20.500,2.500 26.500,8.500" fill="none" stroke="#58b820" stroke-width="1.150" stroke-dasharray="1.300 .35"/><text x="16" y="26.300" text-anchor="middle" font-family="Liberation Sans,sans-serif" font-size="9.500" fill="#303030">alpari</text></svg>
<svg style="left:323px;top:863px" width="32" height="32" viewBox="0 0 32 32"><rect x=".5" y=".5" width="31" height="31" rx="3.500" fill="#fff"/><polyline transform="translate(2.500,2.2)" points="0,8.500 4.500,4 6,5.500 11.500,0 14.500,3 16.500,1.500 19,4 20.500,2.500 26.500,8.500" fill="none" stroke="#f03c1c" stroke-width="1.150" stroke-dasharray="1.300 .35"/><polyline transform="translate(2.500,4.9)" points="0,8.500 4.500,4 6,5.500 11.500,0 14.500,3 16.500,1.500 19,4 20.500,2.500 26.500,8.500" fill="none" stroke="#f08c1c" stroke-width="1.150" stroke-dasharray="1.300 .35"/><polyline transform="translate(2.500,7.6000000000000005)" points="0,8.500 4.500,4 6,5.500 11.500,0 14.500,3 16.500,1.500 19,4 20.500,2.500 26.500,8.500" fill="none" stroke="#c8b41c" stroke-width="1.150" stroke-dasharray="1.300 .35"/><polyline transform="translate(2.500,10.3)" points="0,8.500 4.500,4 6,5.500 11.500,0 14.500,3 16.500,1.500 19,4 20.500,2.500 26.500,8.500" fill="none" stroke="#58b820" stroke-width="1.150" stroke-dasharray="1.300 .35"/><text x="16" y="26.300" text-anchor="middle" font-family="Liberation Sans,sans-serif" font-size="9.500" fill="#303030">alpari</text></svg>
<svg style="left:373px;top:863px" width="32" height="32" viewBox="0 0 32 32"><defs><linearGradient id="jv" x1="0" y1="0" x2="0" y2="1"><stop offset="0" stop-color="#ffffff"/><stop offset="1" stop-color="#dcdfe4"/></linearGradient></defs>
<rect x=".8" y=".8" width="30.400" height="30.400" rx="5" fill="url(#jv)" stroke="#5c7c9c" stroke-width="1.300"/>
<g fill="none" stroke="#e8701c" stroke-width="1.700" stroke-linecap="round"><path d="M17 3.500Q11.500 8 14.500 11.500Q17 14.500 14 17"/><path d="M20.500 7.500Q16.500 10.500 18.500 12.500Q20 14.500 18 16.500"/></g>
<g fill="none" stroke="#587ca4" stroke-width="1.500" stroke-linecap="round"><path d="M9 18Q15.500 20 22 18"/><path d="M10.500 21Q15.500 22.500 20.500 21"/><path d="M11.500 24Q15.500 25.200 19.500 24"/><path d="M23 17.500Q27 17.500 24.500 21Q23.500 22.300 22 22.500"/><path d="M7 25.500Q4.500 27.500 10 28.300Q17 29.300 23.500 27.500"/></g></svg>
<svg style="left:420px;top:865px" width="34" height="29" viewBox="0 0 34 29"><defs><linearGradient id="ml" x1="0" y1="0" x2="1" y2="1"><stop offset="0" stop-color="#7cb4f0"/><stop offset="1" stop-color="#d8ecfc"/></linearGradient></defs>
<path d="M10.500 1L31 6.500L28 21L8 17z" fill="#7cc060" stroke="#58a040" stroke-width=".6"/>
<path d="M7.500 4H27.500V20H7.500z" fill="#f8a440" stroke="#e08820" stroke-width=".6"/>
<path d="M5 8.500H26V23.500H5z" fill="url(#ml)" stroke="#4c8cd8" stroke-width=".8"/>
<rect x="11" y="16" width="9" height="4.500" fill="#fff"/><rect x="20.500" y="10.500" width="4" height="3.500" fill="#d8281c"/><path d="M15 11.500h4.500M15 13.500h4.500" stroke="#5c94dc" stroke-width=".7"/>
<path d="M1 23.500Q8 29 18 24.500Q9 26.500 3 22.500z" fill="#f8a828"/>
<rect x="18.500" y="17.500" width="13" height="9" fill="#f4e080" stroke="#c8a838" stroke-width=".8"/><path d="M18.500 17.500L25 23L31.500 17.500M18.500 26.500L23.500 21.500M31.500 26.500L26.500 21.500" fill="none" stroke="#c8a838" stroke-width=".7"/></svg>
<svg style="left:469px;top:862px" width="32" height="32" viewBox="0 0 32 32"><g fill="#00aff0"><circle cx="16" cy="16" r="12.500"/><circle cx="9.500" cy="9" r="8"/><circle cx="22.500" cy="23" r="8"/></g>
<text x="16" y="25" text-anchor="middle" font-family="Liberation Sans,sans-serif" font-weight="bold" font-size="25" fill="#fff">S</text></svg>
<svg style="left:520px;top:862px" width="38" height="32" viewBox="0 0 38 32"><g font-family="Liberation Sans,sans-serif" font-weight="bold" font-size="33" stroke-linejoin="miter">
<text x="4" y="28.200" fill="#00ff00" stroke="#103c10" stroke-width="3.400" textLength="19.500" lengthAdjust="spacingAndGlyphs">0</text><text x="4" y="28.200" fill="#00ff00" stroke="#00ff00" stroke-width="1.400" textLength="19.500" lengthAdjust="spacingAndGlyphs">0</text>
<text x="23.600" y="25.600" fill="#00ff00" stroke="#103c10" stroke-width="4">:</text><text x="23.600" y="25.600" fill="#00ff00" stroke="#00ff00" stroke-width="2.400">:</text></g></svg>
<svg style="left:572px;top:864px" width="34" height="31" viewBox="0 0 34 31"><defs><linearGradient id="tw" x1="0" y1="0" x2="1" y2="0"><stop offset="0" stop-color="#f4f4f4"/><stop offset="1" stop-color="#a8acb0"/></linearGradient></defs>
<path d="M2 7L8 4.500L10.500 5.500V22L4.500 25L2 23.500z" fill="url(#tw)" stroke="#888c90" stroke-width=".6"/><rect x="3" y="8.500" width="1.500" height="3" fill="#70c040"/>
<ellipse cx="21" cy="26.500" rx="8.500" ry="3.500" fill="#e4e6e8" stroke="#a0a4a8" stroke-width=".7"/><path d="M19 20h4v6h-4z" fill="#c8ccd0"/>
<path d="M9.500 2.500L32 4.500L30.500 24L9 20z" fill="#e0e2e4" stroke="#909498" stroke-width=".7"/>
<path d="M11 4L30.500 5.800L29.300 22L10.600 18.600z" fill="#0c140c"/>
<path d="M11 8L30 9.700M11 12L29.800 13.800M10.800 15.500L29.500 17.800" stroke="#38683c" stroke-width=".6"/>
<polyline points="11,15.500 13,16 14.500,12 16,15 17.500,8 19,14 20.500,11 22,16.500 23.500,9 25,15 26.500,12 28,18 29.500,14" fill="none" stroke="#22c83a" stroke-width="1"/></svg>
<svg style="left:622px;top:864px" width="33" height="31" viewBox="0 0 33 31"><defs><linearGradient id="np" x1="0" y1="0" x2="1" y2="1"><stop offset="0" stop-color="#c0e8f4"/><stop offset=".5" stop-color="#74bcd8"/><stop offset="1" stop-color="#4ca0c8"/></linearGradient></defs>
<path d="M28 4L31.500 6.500L29 26.500L25 29.500z" fill="#c89848"/>
<path d="M26.500 3.500L29.500 5.500L25.500 29.500L22 28z" fill="#f4f8fc" stroke="#b8c8d8" stroke-width=".5"/>
<path d="M12.500 1L28 3.500L22.500 28.500L1 21z" fill="url(#np)"/>
<path d="M12.500 1L28 3.500L27.600 5.500L12 3z" fill="#6c7c88"/><path d="M13 1.200l1 .2M15 1.500l1 .2M17 1.800l1 .2M19 2.100l1 .2M21 2.400l1 .2M23 2.700l1 .2M25 3l1 .2" stroke="#d8dce0" stroke-width="1"/>
<path d="M13 4L20 5L8 22.500L2.500 20.500z" fill="#fff" opacity=".18"/></svg>
<svg style="left:0;top:0" width="1440" height="900" viewBox="0 0 1440 900"><rect x="677" y="873.1" width="6" height="3.600" fill="#1e8cd2"/><rect x="677" y="877.6" width="6" height="3.600" fill="#1e8cd2"/><rect x="677" y="882.2" width="6" height="3.600" fill="#e03c30"/><rect x="685" y="864.0" width="6" height="3.600" fill="#1e8cd2"/><rect x="685" y="868.5" width="6" height="3.600" fill="#1e8cd2"/><rect x="685" y="873.1" width="6" height="3.600" fill="#1e8cd2"/><rect x="685" y="877.6" width="6" height="3.600" fill="#1e8cd2"/><rect x="685" y="882.2" width="6" height="3.600" fill="#e03c30"/><rect x="685" y="886.8" width="6" height="3.600" fill="#e03c30"/><rect x="693" y="868.5" width="6" height="3.600" fill="#1e8cd2"/><rect x="693" y="873.1" width="6" height="3.600" fill="#1e8cd2"/><rect x="693" y="877.6" width="6" height="3.600" fill="#1e8cd2"/><rect x="693" y="882.2" width="6" height="3.600" fill="#e03c30"/><rect x="693" y="886.8" width="6" height="3.600" fill="#e03c30"/><rect x="693" y="891.3" width="6" height="3.600" fill="#e03c30"/></svg>
<svg style="left:723px;top:863px" width="32" height="32" viewBox="0 0 32 32"><defs><linearGradient id="ab" x1="0" y1="0" x2="1" y2="1"><stop offset="0" stop-color="#a80000"/><stop offset=".3" stop-color="#300000"/><stop offset=".5" stop-color="#000"/></linearGradient></defs>
<rect width="32" height="32" rx="5" fill="url(#ab)"/><text x="15.500" y="25.300" text-anchor="middle" font-family="DejaVu Sans,sans-serif" font-weight="bold" font-size="35" fill="#ff0000" textLength="22" lengthAdjust="spacingAndGlyphs">α</text></svg>
<div class="a" style="left:1256px;top:860px;width:182px;height:37px;border:1px solid;border-color:#808080 #fff #fff #808080"></div>
<svg style="left:1262px;top:872px" width="8" height="10" viewBox="0 0 8 10"><path d="M.8 4L4 1L7.200 4M.8 8.500L4 5.500L7.200 8.500" fill="none" stroke="#000" stroke-width="1.600"/></svg>
<svg style="left:1278px;top:870px" width="18" height="18" viewBox="0 0 18 18"><defs><linearGradient id="nw" x1="0" y1="0" x2="1" y2="1"><stop offset="0" stop-color="#e8e8e8"/><stop offset="1" stop-color="#787878"/></linearGradient></defs>
<rect x="5.500" y="3.500" width="11" height="9.500" fill="url(#nw)" stroke="#f8f8f8" stroke-width="1"/><rect x="4.500" y="2.500" width="13" height="11.500" fill="none" stroke="#909090" stroke-width=".6"/>
<path d="M9 14h4v2h3v1H6v-1h3z" fill="#f0f0f0" stroke="#888" stroke-width=".5"/>
<path d="M2 1.500v3.500M5 1.500v3.500M1.500 5h4v2.500h-1.200V16H2.800V7.500H1.500z" fill="#f4f4f4" stroke="#707070" stroke-width=".7"/></svg>
<svg style="left:1302px;top:870px" width="18" height="18" viewBox="0 0 18 18"><rect x="1.500" y="1" width="2" height="16" rx="1" fill="#f0f0f0" stroke="#808080" stroke-width=".6"/>
<path d="M3.500 2.500Q7 .8 10 3Q13 5 16.500 3.500V10Q13 11.500 10 9.500Q7 7.500 3.500 9z" fill="#f8f8f8" stroke="#909090" stroke-width=".7"/>
<circle cx="12" cy="12" r="4.800" fill="#e02020" stroke="#b01010" stroke-width=".5"/><path d="M10 10L14 14M14 10L10 14" stroke="#fff" stroke-width="1.500"/></svg>
<svg style="left:1326px;top:870px" width="18" height="18" viewBox="0 0 18 18"><path d="M1.500 6.500H4L8.500 2V16L4 11.500H1.500z" fill="#f0f0f0" stroke="#707070" stroke-width=".9"/>
<path d="M10.500 6Q12.500 9 10.500 12M12.500 4Q16 9 12.500 14M14.500 2.500Q19 9 14.500 15.500" fill="none" stroke="#848484" stroke-width="1.100"/></svg>
<div class="t " style="left:1370.4px;top:862px;letter-spacing:0.25px;">16:28</div>
<div class="t " style="left:1356.5px;top:878px;letter-spacing:0.12px;">19/11/2012</div>
<svg style="left:1420px;top:873px" width="16" height="13" viewBox="0 0 16 13"><defs><linearGradient id="sd" x1="0" y1="0" x2="1" y2="1"><stop offset="0" stop-color="#2c6cd0"/><stop offset="1" stop-color="#1448a8"/></linearGradient></defs><rect width="16" height="13" fill="#9cc0ec"/><rect x="1" y="1" width="14" height="11" fill="url(#sd)"/><rect x="1" y="9" width="14" height="2.500" fill="#202428"/><rect x="1.500" y="9" width="2.500" height="2.500" fill="#e8a020"/></svg>
</body></html>
